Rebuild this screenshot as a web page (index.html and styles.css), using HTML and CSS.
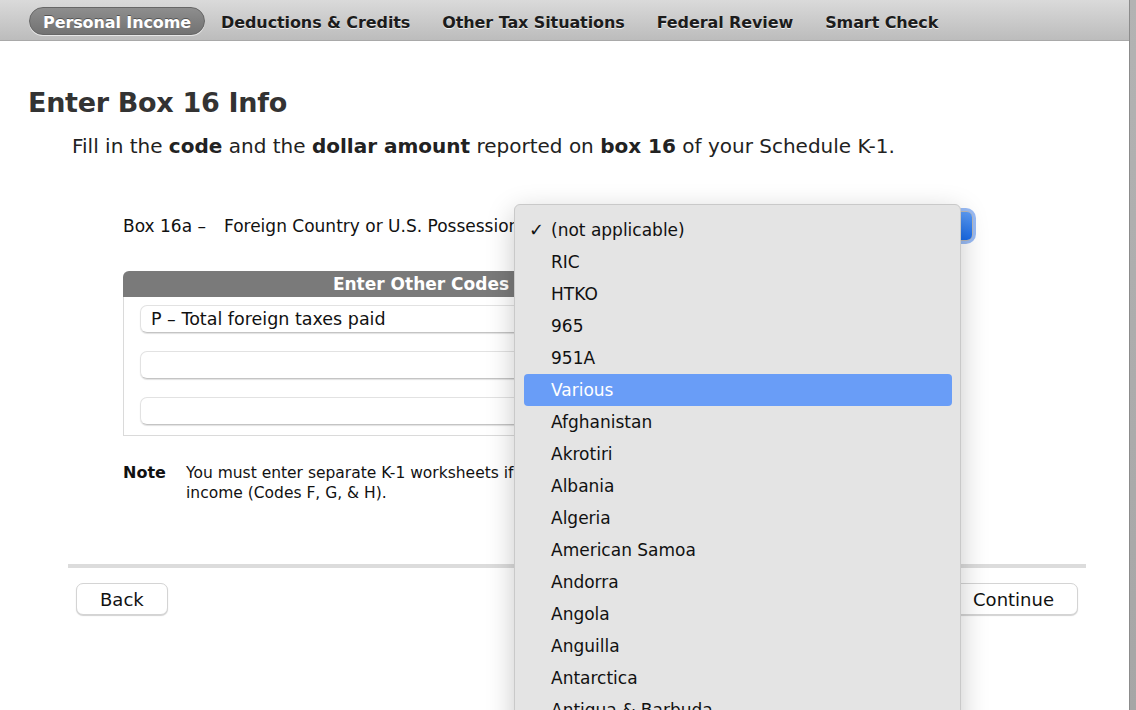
FILE: index.html
```html
<!DOCTYPE html>
<html lang="en">

<head>
  <meta charset="UTF-8" />
  <title>Enter Box 16 Info</title>
  <link rel="stylesheet" href="styles.css">
</head>

<body>

  <div class="window">
    <div class="page">

      <div class="tabs">
        <span class="tab active">Personal Income</span>
        <span class="tab">Deductions &amp; Credits</span>
        <span class="tab">Other Tax Situations</span>
        <span class="tab">Federal Review</span>
        <span class="tab">Smart Check</span>
      </div>

      <div class="content">
        <h1>Enter Box 16 Info</h1>
        <p class="intro">Fill in the <b>code</b> and the <b>dollar amount</b> reported on <b>box 16</b> of your Schedule K-1.</p>

        <div class="form">
          <div class="field-row">
            <span class="field-label">Box 16a &ndash;</span>
            <span class="field-label">Foreign Country or U.S. Possession</span>
            <div class="popup"><span class="popup-arrows"></span></div>
          </div>

          <div class="codes">
            <div class="codes-head">Enter Other Codes</div>
            <div class="codes-body">
              <div class="code-input">P &ndash; Total foreign taxes paid</div>
              <div class="code-input"></div>
              <div class="code-input"></div>
            </div>
          </div>

          <div class="note">
            <span class="note-title">Note</span>
            <span class="note-text">You must enter separate K-1 worksheets if you have more than one type of<br>income (Codes F, G, &amp; H).</span>
          </div>
        </div>

        <div class="footer">
          <button class="btn">Back</button>
          <button class="btn">Continue</button>
        </div>
      </div>

      <!-- open popup menu for box 16a -->
      <ul class="menu">
        <li class="checked">(not applicable)</li>
        <li>RIC</li>
        <li>HTKO</li>
        <li>965</li>
        <li>951A</li>
        <li class="hover">Various</li>
        <li>Afghanistan</li>
        <li>Akrotiri</li>
        <li>Albania</li>
        <li>Algeria</li>
        <li>American Samoa</li>
        <li>Andorra</li>
        <li>Angola</li>
        <li>Anguilla</li>
        <li>Antarctica</li>
        <li>Antigua &amp; Barbuda</li>
      </ul>
    </div>

    <div class="frame-edge"></div>
  </div>

</body>

</html>
```

FILE: styles.css
```css
body {
  margin: 0;
  font-family: "DejaVu Sans", Verdana, sans-serif;
  color: #111;
  background: #fff;
  overflow: hidden;
}

.window {
  display: flex;
  height: 710px;
}

.page {
  flex: 1;
  position: relative;
  overflow: hidden;
}

.frame-edge {
  width: 6px;
  background: linear-gradient(#b3b3b3, #a6a6a6);
  border-left: 1px solid #8c8c8c;
}

/* top navigation */
.tabs {
  display: flex;
  align-items: center;
  gap: 8px;
  height: 41px;
  padding: 1px 0 0 29px;
  background: linear-gradient(#dadada, #bcbcbc);
  border-bottom: 1px solid #a9a9a9;
  box-sizing: border-box;
}

.tab {
  font-size: 16px;
  font-weight: bold;
  color: #1c1c1c;
  text-shadow: 0 1px 0 #f2f2f2;
  padding: 6px 12px 3px;
  letter-spacing: -0.1px;
}

.tab.active {
  color: #fff;
  text-shadow: 0 -1px 0 #555;
  background: linear-gradient(#8e8e8e, #727272);
  border: 1px solid #666;
  border-radius: 14px;
  box-shadow: 0 1px 0 #e6e6e6;
  padding: 5px 13px 2px;
  margin-right: -4px;
}

.content {
  padding: 0 50px 0 28px;
}

h1 {
  margin: 46px 0 0;
  font-size: 27px;
  color: #333;
  letter-spacing: -0.3px;
}

.intro {
  margin: 16px 0 0 44px;
  font-size: 20px;
  color: #222;
}

.form {
  margin-left: 95px;
}

.field-row {
  display: flex;
  align-items: center;
  margin-top: 51px;
  height: 34px;
  font-size: 17px;
}

.field-label {
  margin-right: 18px;
  white-space: nowrap;
}

.popup {
  flex: 1;
  height: 28px;
  margin: 0 107px 0 0;
  border-radius: 6px;
  background: #fff;
  box-shadow: 0 0 0 1px #b8b8b8, 0 0 0 4px rgba(98, 150, 240, 0.65);
  display: flex;
  justify-content: flex-end;
}

.popup-arrows {
  width: 18px;
  border-radius: 0 5px 5px 0;
  background: linear-gradient(#5b9bf5, #1a6ceb);
}

.codes {
  margin-top: 28px;
  width: 596px;
}

.codes-head {
  height: 26px;
  line-height: 27px;
  background: #7a7a7a;
  color: #fff;
  font-weight: bold;
  font-size: 17px;
  text-align: center;
  border-radius: 6px 6px 0 0;
}

.codes-body {
  border: 1px solid #dadada;
  border-top: none;
  padding: 8px 16px 10px;
  display: flex;
  flex-direction: column;
  gap: 18px;
}

.code-input {
  height: 26px;
  line-height: 26px;
  padding: 0 10px;
  font-size: 17.5px;
  color: #111;
  border: 1px solid #e2e2e2;
  border-bottom-color: #c4c4c4;
  border-radius: 7px;
  box-shadow: 0 1px 1px rgba(0, 0, 0, 0.12);
  white-space: nowrap;
}

.note {
  display: flex;
  margin-top: 27px;
  font-size: 15.5px;
  line-height: 20px;
}

.note-title {
  font-weight: bold;
  font-size: 16px;
  width: 63px;
  flex: none;
}

.note-text {
  white-space: nowrap;
}

.footer {
  display: flex;
  justify-content: space-between;
  margin: 61px 0 0 40px;
  padding: 15px 8px 0 8px;
  width: 1002px;
  border-top: 4px solid #dcdcdc;
}

.btn {
  font-family: inherit;
  font-size: 18px;
  color: #111;
  height: 32px;
  padding: 0 23px;
  background: #fff;
  border: 1px solid #d4d4d4;
  border-radius: 7px;
  box-shadow: 0 1px 1px rgba(0, 0, 0, 0.18);
}

/* popup menu */
.menu {
  position: absolute;
  left: 514px;
  top: 204px;
  width: 447px;
  height: 540px;
  margin: 0;
  padding: 9px 8px 0 9px;
  box-sizing: border-box;
  list-style: none;
  background: #e4e4e4;
  border: 1px solid #c9c9c9;
  border-radius: 6px;
  box-shadow: 0 8px 28px rgba(0, 0, 0, 0.22);
  font-size: 17px;
  color: #111;
}

.menu li {
  height: 32px;
  line-height: 32px;
  padding-left: 27px;
  border-radius: 4px;
  position: relative;
}

.menu li.checked::before {
  content: "\2713";
  position: absolute;
  left: 5px;
  font-size: 18px;
  font-weight: bold;
}

.menu li.hover {
  background: #699df7;
  color: #fff;
}
```
